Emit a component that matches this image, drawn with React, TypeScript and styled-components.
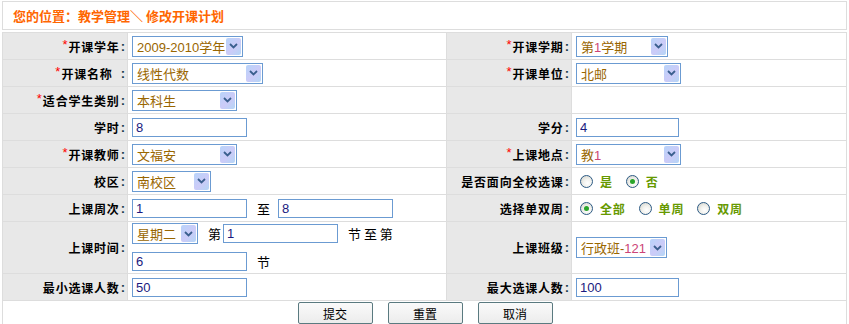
import styled, { createGlobalStyle } from "styled-components";

const GlobalStyle = createGlobalStyle`
    body{
        margin: 0;
        background: #fff;
        font-family: "Liberation Sans", "Noto Sans CJK SC", sans-serif;
    }
`;

const Page = styled.div`
    width: 845px;
    padding: 1px 0 0 2px;
`;

const Crumb = styled.div`
    height: 27px;
    border: 1px solid #dddddd;
    display: flex;
    align-items: center;
    padding-left: 10px;
    color: #ff6600;
    font-size: 13px;
    font-weight: bold;
    font-family: "Noto Sans CJK SC", sans-serif;
`;

const Form = styled.div`
    margin-top: 2px;
    display: grid;
    grid-template-columns: 124px 318px 124px 274px;
    grid-auto-rows: minmax(26px, auto);
    gap: 1px;
    background: #dddddd;
    border: 1px solid #dddddd;
`;

const Label = styled.div`
    background: #e8e8e8;
    display: flex;
    align-items: center;
    justify-content: flex-end;
    padding-right: 2px;
    font-size: 12px;
    font-weight: bold;
    color: #000;
    font-family: "Noto Sans CJK SC", sans-serif;
    white-space: pre;
    .text{
        letter-spacing: 0.8px;
    }
    .star{
        color: #ff0000;
        font-family: "Liberation Sans", sans-serif;
        font-weight: normal;
        font-size: 13px;
        margin-right: 1px;
        position: relative;
        top: -2px;
    }
    .colon{
        color: #1c3c4c;
        font-family: "Liberation Sans", sans-serif;
        font-size: 13px;
        margin-left: 1px;
    }
`;

const Field = styled.div<{ $wrap?: boolean }>`
    background: #fff;
    display: flex;
    align-items: center;
    flex-wrap: ${p => (p.$wrap ? "wrap" : "nowrap")};
    padding: ${p => (p.$wrap ? "1px 0 2px 4px" : "0 0 0 4px")};
    row-gap: 4px;
    font-size: 13px;
    font-family: "Noto Sans CJK SC", sans-serif;
    color: #000;
    .txt{
        margin: 0 8px 0 10px;
        white-space: nowrap;
    }
    .break{
        flex-basis: 100%;
        height: 0;
    }
`;

const Footer = styled.div`
    grid-column: 1 / -1;
    background: #fff;
    display: flex;
    justify-content: center;
    align-items: center;
    gap: 15px;
    padding-left: 1px;
    height: 24px;
`;

const Button = styled.button`
    width: 75px;
    height: 22px;
    border: 1px solid #5a7a80;
    border-radius: 2px;
    background: linear-gradient(#fafafa, #ececec);
    font-size: 12px;
    font-family: "Noto Sans CJK SC", sans-serif;
    color: #000;
    padding: 0;
`;

const SelectBox = styled.div<{ $w: number }>`
    width: ${p => p.$w}px;
    height: 21px;
    box-sizing: border-box;
    border: 1px solid #6b9bd2;
    display: flex;
    align-items: center;
    justify-content: space-between;
    padding: 0 1px 0 4px;
    color: #996600;
    font-size: 13px;
    font-family: "Liberation Sans", "Noto Sans CJK SC", sans-serif;
    white-space: nowrap;
    overflow: hidden;
    .num{
        color: #cc4477;
    }
`;

const Arrow = styled.div`
    width: 15px;
    height: 17px;
    border-radius: 2px;
    background: linear-gradient(135deg, #b8d4fa 0%, #cccbf8 55%, #b4d6f6 100%);
    display: flex;
    align-items: center;
    justify-content: center;
    flex-shrink: 0;
`;

const TextInput = styled.input<{ $w?: number }>`
    width: ${p => p.$w ?? 115}px;
    height: 19px;
    box-sizing: border-box;
    border: 1px solid #6b9bd2;
    padding: 0 3px;
    font-size: 13px;
    font-family: "Liberation Sans", sans-serif;
    color: #1a1a80;
    outline: none;
`;

const RadioGroup = styled.div`
    display: flex;
    align-items: center;
    padding-left: 4px;
`;

const RadioDot = styled.span<{ $on?: boolean }>`
    width: 13px;
    height: 13px;
    box-sizing: border-box;
    border-radius: 50%;
    border: 1px solid #2c5a84;
    background: radial-gradient(circle at 60% 65%, #ffffff 0%, #f2f2ee 40%, #cfcfc6 100%);
    display: inline-flex;
    align-items: center;
    justify-content: center;
    &::after{
        content: "";
        width: 5px;
        height: 5px;
        border-radius: 50%;
        background: ${p => (p.$on ? "#2aa52a" : "transparent")};
    }
`;

const RadioText = styled.span`
    color: #669900;
    font-weight: bold;
    font-size: 12px;
    letter-spacing: 0.8px;
    font-family: "Noto Sans CJK SC", sans-serif;
    margin: 0 13px 0 7px;
`;

function Select({ w, children }: { w: number; children: React.ReactNode }) {
    return (
        <SelectBox $w={w}>
            <span>{children}</span>
            <Arrow>
                <svg width="9" height="6" viewBox="0 0 9 6">
                    <path d="M1 1 L4.5 4.5 L8 1" stroke="#3a5f8e" strokeWidth="1.8" fill="none" />
                </svg>
            </Arrow>
        </SelectBox>
    );
}

function L({ text, star }: { text: string; star?: boolean }) {
    return (
        <Label>
            {star && <span className="star">*</span>}
            <span className="text">{text}</span>
            <span className="colon">:</span>
        </Label>
    );
}

function Radio({ label, on }: { label: string; on?: boolean }) {
    return (
        <>
            <RadioDot $on={on} />
            <RadioText>{label}</RadioText>
        </>
    );
}

export default function App() {
    return (
        <Page>
            <GlobalStyle />
            <Crumb>您的位置：教学管理＼ 修改开课计划</Crumb>
            <Form>
                <L text="开课学年" star />
                <Field><Select w={111}>2009-2010学年</Select></Field>
                <L text="开课学期" star />
                <Field><Select w={92}>第<span className="num">1</span>学期</Select></Field>

                <L text="开课名称  " star />
                <Field><Select w={131}>线性代数</Select></Field>
                <L text="开课单位" star />
                <Field><Select w={105}>北邮</Select></Field>

                <L text="适合学生类别" star />
                <Field><Select w={105}>本科生</Select></Field>
                <Label />
                <Field />

                <L text="学时" />
                <Field><TextInput defaultValue="8" /></Field>
                <L text="学分" />
                <Field><TextInput $w={103} defaultValue="4" /></Field>

                <L text="开课教师" star />
                <Field><Select w={105}>文福安</Select></Field>
                <L text="上课地点" star />
                <Field><Select w={105}>教<span className="num">1</span></Select></Field>

                <L text="校区" />
                <Field><Select w={79}>南校区</Select></Field>
                <L text="是否面向全校选课" />
                <Field>
                    <RadioGroup>
                        <Radio label="是" />
                        <Radio label="否" on />
                    </RadioGroup>
                </Field>

                <L text="上课周次" />
                <Field>
                    <TextInput defaultValue="1" />
                    <span className="txt">至</span>
                    <TextInput defaultValue="8" />
                </Field>
                <L text="选择单双周" />
                <Field>
                    <RadioGroup>
                        <Radio label="全部" on />
                        <Radio label="单周" />
                        <Radio label="双周" />
                    </RadioGroup>
                </Field>

                <L text="上课时间" />
                <Field $wrap>
                    <Select w={66}>星期二</Select>
                    <span className="txt" style={{ margin: "0 2px 0 10px" }}>第</span>
                    <TextInput defaultValue="1" />
                    <span className="txt">节 至 第</span>
                    <span className="break" />
                    <TextInput defaultValue="6" />
                    <span className="txt">节</span>
                </Field>
                <L text="上课班级" />
                <Field><Select w={91}>行政班-<span className="num">121</span></Select></Field>

                <L text="最小选课人数" />
                <Field><TextInput defaultValue="50" /></Field>
                <L text="最大选课人数" />
                <Field><TextInput $w={103} defaultValue="100" /></Field>

                <Footer>
                    <Button>提交</Button>
                    <Button>重置</Button>
                    <Button>取消</Button>
                </Footer>
            </Form>
        </Page>
    );
}
